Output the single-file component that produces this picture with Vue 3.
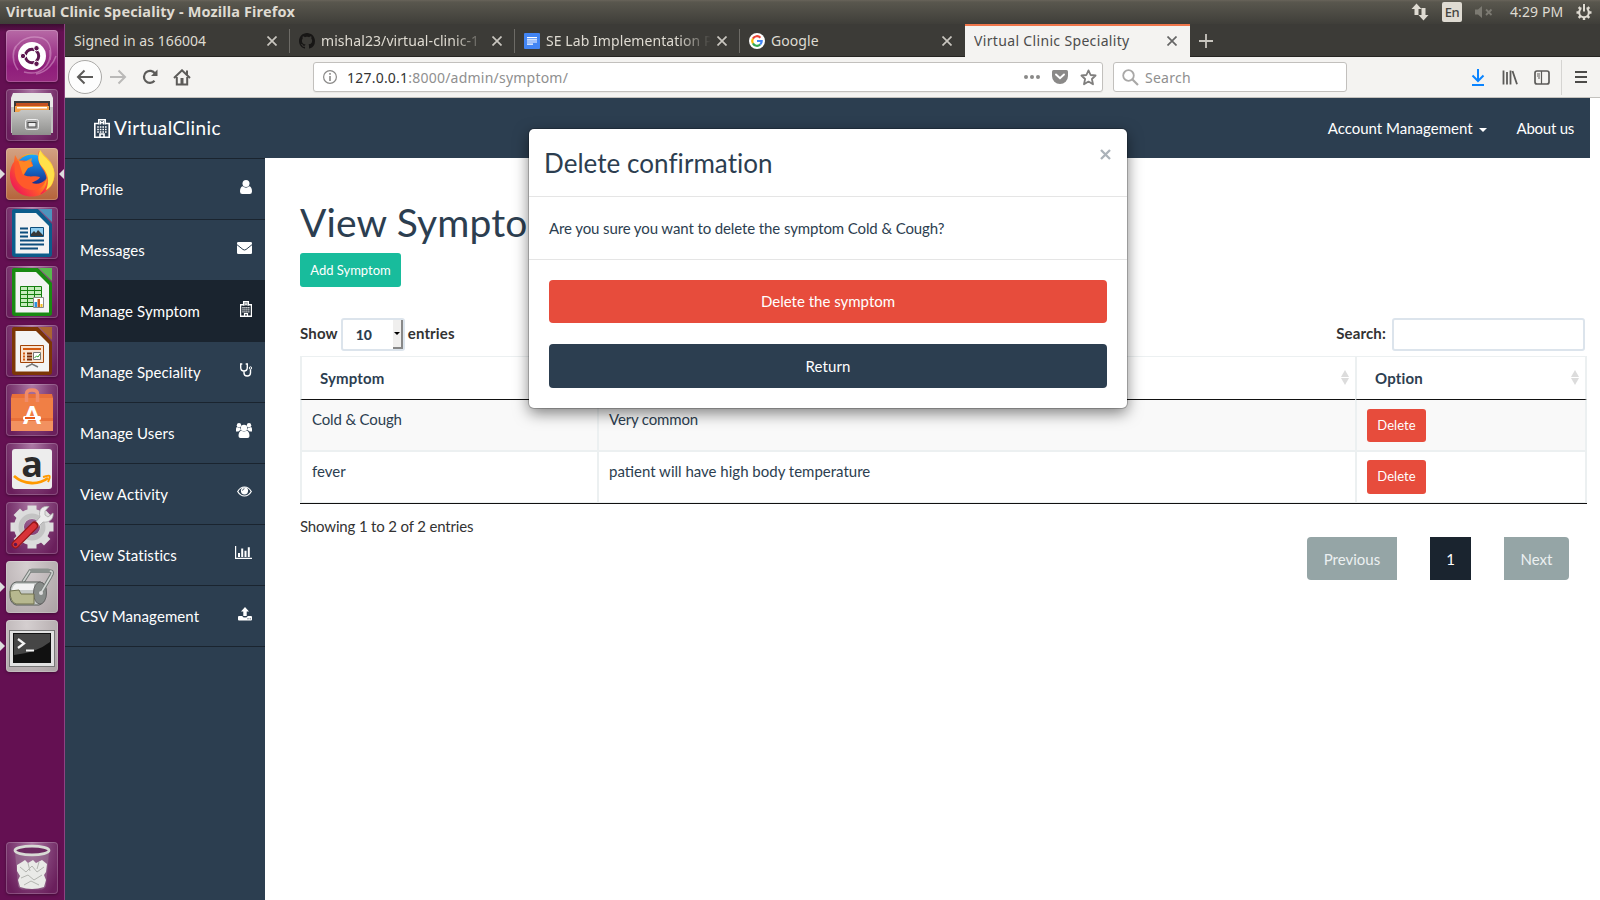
<script setup>
const tabs = [
  { title: 'Signed in as 166004', icon: null },
  { title: 'mishal23/virtual-clinic-1', icon: 'github', fade: true },
  { title: 'SE Lab Implementation P', icon: 'docs', fade: true },
  { title: 'Google', icon: 'google' },
  { title: 'Virtual Clinic Speciality', icon: null, active: true },
]
const menu = [
  { label: 'Profile', icon: 'user' },
  { label: 'Messages', icon: 'mail' },
  { label: 'Manage Symptom', icon: 'hospital', active: true },
  { label: 'Manage Speciality', icon: 'steth' },
  { label: 'Manage Users', icon: 'users' },
  { label: 'View Activity', icon: 'eye' },
  { label: 'View Statistics', icon: 'chart' },
  { label: 'CSV Management', icon: 'upload' },
]
const rows = [
  { name: 'Cold & Cough', info: 'Very common' },
  { name: 'fever', info: 'patient will have high body temperature' },
]
</script>

<template>
  <div class="desktop">
    <header class="panel">
      <b class="wintitle">Virtual Clinic Speciality - Mozilla Firefox</b>
      <div class="tray">
        <svg class="t-net" width="18" height="18" viewBox="0 0 18 18"><path fill="#dfdbd2" d="M5.500 0.500 10.500 6H7.500V12H3.500V6H.5ZM12.500 17.500 7.500 12H10.500V5H14.500V12H17.500Z" /></svg>
        <span class="lang">En</span>
        <svg class="t-vol" width="18" height="14" viewBox="0 0 18 14"><path fill="#7c7a72" d="M0 4.500H3L7 1V13L3 9.500H0Z" /><path stroke="#7c7a72" stroke-width="1.800" d="M11 4.500 16.500 10M16.500 4.500 11 10" /></svg>
        <span class="clock">4:29 PM</span>
        <svg class="t-gear" width="16" height="18" viewBox="0 0 16 18"><circle cx="8" cy="9.500" r="4.800" fill="none" stroke="#dfdbd2" stroke-width="2" /><path stroke="#dfdbd2" stroke-width="2.400" d="M8 14v3M.5 9.500h3M12.500 9.500h3M2.700 14.800l2-2M13.300 14.800l-2-2M2.700 4.200l2 2M13.300 4.200l-2 2" /><path stroke="#4c4b44" stroke-width="5" d="M8 1v7.500" /><path stroke="#dfdbd2" stroke-width="2" d="M8 1v7.500" /></svg>
      </div>
    </header>

    <div class="below">
      <aside class="launcher">
        <div class="tile dash">
          <svg viewBox="0 0 52 52"><g fill="none" stroke="#e7b8dc" stroke-opacity=".45" stroke-width="1.500"><path d="M8 32C4 14 20 4 36 8C44 11 46 20 44 30M44 20C46 38 32 46 18 42M12 40C6 32 6 22 10 16M30 44C42 42 48 32 50 26" /></g><circle cx="26" cy="27" r="14" fill="#7d1a68" opacity=".5" /><circle cx="26" cy="26" r="14" fill="#fff" /><circle cx="26" cy="26" r="6.700" fill="none" stroke="#5e1650" stroke-width="3" /><path stroke="#fff" stroke-width="1.300" d="M26 26 18 26M26 26 30 19M26 26 30 33" /><g fill="#5e1650" stroke="#fff" stroke-width="1"><circle cx="17" cy="26" r="2.700" /><circle cx="30.500" cy="18.200" r="2.700" /><circle cx="30.500" cy="33.800" r="2.700" /></g></svg>
        </div>
        <div class="tile">
          <svg viewBox="0 0 52 52"><defs><linearGradient id="cab" x1="0" y1="0" x2="0" y2="1"><stop offset="0" stop-color="#c6c6c4" /><stop offset="1" stop-color="#8f8f8d" /></linearGradient></defs><path fill="#e9e9e7" d="M7 4H45L47 9V44H5V9Z" /><path fill="#777" d="M5 18h42v26H5z" opacity=".35" /><path fill="#3a3a3a" d="M8 12h36v12H8z" /><path fill="#c4501f" d="M10 14h32v3H10z" /><path fill="#f3a24a" d="M9 17h34v7H9z" /><path fill="#fff" d="M11 18h30v1.500H11z" /><path fill="url(#cab)" d="M6 23H13L15 21H45V46H6Z" /><rect x="19.500" y="30.500" width="13" height="10" rx="2" fill="#aaa" stroke="#eee" /><rect x="22" y="33.500" width="8" height="4.500" fill="#eee" stroke="#444" /></svg>
        </div>
        <div class="tile fox running focused">
          <svg viewBox="0 0 52 52"><defs><linearGradient id="ff" x1=".95" y1=".1" x2=".1" y2=".85"><stop offset="0" stop-color="#fff44f" /><stop offset=".35" stop-color="#ffb81c" /><stop offset=".65" stop-color="#ff5a2a" /><stop offset="1" stop-color="#ef1a55" /></linearGradient><linearGradient id="fb" x1="0" y1="0" x2="0" y2="1"><stop offset="0" stop-color="#19a7ff" /><stop offset="1" stop-color="#15207e" /></linearGradient></defs><path fill="url(#ff)" d="M9 7 12 12C16 7 22 5 28 6L36 10C35 5 33 4 34 2C38 8 46 13 48 23C50 38 38 48.500 26 48.500C12 48.500 3 38 4 25C4.500 19 7 15 8 14Z" /><circle cx="26" cy="23" r="16.500" fill="url(#fb)" /><path fill="url(#ff)" d="M33 2.500C38 8 47 12 48.500 25C49 36 42 44 34 46.500C42 38 42 30 38 23C34 17 30 12 33 2.500Z" /><path fill="#ffe14a" d="M34 2.500C38 10 48 14 48 27C47.500 36 44 40 40 42C44 33 42 26 37 20C32 15 31 9 34 2.500Z" /><path fill="#ff5a2a" d="M9 14C14 12 20 12 26 14L27 18L22 20C20 23 19 25 18 27C25 30 28 27 34 29C33 32 28 33 26 35C31 37 37 35 40 31C38 41 29 44 21 41C12 38 7 30 9 14Z" /><path fill="#ff9122" d="M12 12 18 14 26 10 25 15 27 18 22 20 17 27Z" opacity=".8" /></svg>
        </div>
        <div class="tile doc">
          <svg viewBox="0 0 52 52"><path fill="#0b5c8b" d="M8 2H32L46 17V47q0 3-3 3H9q-3 0-3-3V4q0-2 2-2Z" /><path fill="#f4f4f4" d="M9.500 6H30L43 19V46.500H9.500Z" /><path fill="#4d94bd" d="M33 2H46V15Z" /><path stroke="#0d4d7c" stroke-width="2" d="M14 21.500h8M14 25.500h8M14 29.500h8M14 33.500h24M14 37.500h24M14 41.500h18" /><path fill="#8fcdf0" stroke="#0d4d7c" d="M24.500 20.500h13v9h-13z" /><path fill="#383838" d="M25 29V27L28 24L30 26L32 23L37 28V29Z" /></svg>
        </div>
        <div class="tile doc">
          <svg viewBox="0 0 52 52"><path fill="#198a12" d="M8 2H32L46 17V47q0 3-3 3H9q-3 0-3-3V4q0-2 2-2Z" /><path fill="#f4f4f4" d="M9.500 6H30L43 19V46.500H9.500Z" /><path fill="#58b94e" d="M33 2H46V15Z" /><path fill="#c5ecbc" stroke="#168010" d="M14.500 20.500h21v20h-21zM14.500 24.500h21M14.500 28.500h21M14.500 32.500h21M14.500 36.500h21M21.500 20.500v20M28.500 20.500v20" /><path fill="#fff" stroke="#888" d="M27.500 31.500h10v10h-10z" /><path fill="#2a92df" d="M28.500 36h2.500v5h-2.500z" /><path fill="#c85a1a" d="M31.500 33h2.500v8h-2.500z" /><path fill="#f2bb1d" d="M34.500 38h2v3h-2z" /></svg>
        </div>
        <div class="tile doc">
          <svg viewBox="0 0 52 52"><path fill="#7c3606" d="M8 2H32L46 17V47q0 3-3 3H9q-3 0-3-3V4q0-2 2-2Z" /><path fill="#f4f4f4" d="M9.500 6H30L43 19V46.500H9.500Z" /><path fill="#aa6532" d="M33 2H46V15Z" /><path fill="#f9e3d0" stroke="#a24408" d="M14.500 20.500h23v17h-23z" /><path fill="#d35a10" d="M17 23h18v2H17z" /><path stroke="#d35a10" stroke-width="2" d="M17 28.500h2M17 31.500h2M17 34.500h2" /><path stroke="#7a2c05" stroke-width="2" d="M21 28.500h5M21 31.500h5M21 34.500h5" /><path fill="#fff" stroke="#777" d="M27.500 27.500h7v7h-7z" /><path fill="none" stroke="#2fa02a" d="M28.500 33 30.500 31 32 32 34 29" /><path stroke="#777" stroke-width="1.500" d="M26 38v2M20 42l6-3 6 3" fill="none" /></svg>
        </div>
        <div class="tile">
          <svg viewBox="0 0 52 52"><path fill="#e8703a" d="M6 10H46L47 14V47H5V14Z" /><path fill="#f07f45" d="M5 14h42v20H5z" /><path fill="#f29160" d="M5 37h42v10H5z" /><path fill="none" stroke="#ef8b6a" stroke-width="3.500" d="M20.500 18V10q0-4 5.500-4t5.500 4v8" /><text x="26" y="40" text-anchor="middle" font-family="Lato, sans-serif" font-weight="900" font-size="25" fill="#fff">A</text><rect x="17" y="32" width="18" height="4" rx="1.500" fill="#fff" /><rect x="19" y="33" width="10" height="2" fill="#ea5b1c" /></svg>
        </div>
        <div class="tile">
          <svg viewBox="0 0 52 52"><rect x="6" y="6" width="40" height="40" rx="3" fill="#ededed" /><text x="26" y="34" text-anchor="middle" font-family="Open Sans, sans-serif" font-weight="700" font-size="36" fill="#2b2b2b">a</text><path fill="none" stroke="#f90" stroke-width="2.800" d="M8 33C18 42 33 42 42 35" /><path fill="none" stroke="#f90" stroke-width="2" d="M37 34C41 33 43 32 43.500 33C44 34 43 37 42 39" /></svg>
        </div>
        <div class="tile">
          <svg viewBox="0 0 52 52"><g stroke="#dedede" stroke-width="9"><path d="M26 3.500V12M26 38V46.500M4.500 25H13M39 25H47.500M10.800 9.800 17 16M35 34 41.200 40.200M10.800 40.200 17 34M35 16 41.200 9.800" /></g><circle cx="26" cy="25" r="13" fill="none" stroke="#dcdcdc" stroke-width="10" /><circle cx="26" cy="25" r="11" fill="none" stroke="#c3c3c3" stroke-width="5" /><path fill="#ececec" stroke="#a9a9a9" stroke-width=".8" d="M27 23 34 15C32 8 36 3.500 43 4.500L39 9V13L42 15L47 11C48 17 43 21 37 20L30 27Z" /><path stroke="#94161a" stroke-width="8" stroke-linecap="round" d="M9.500 42.500 28.500 23.500" /><path stroke="#d83338" stroke-width="5.500" stroke-linecap="round" d="M9.500 42.500 28 24" /><circle cx="9.500" cy="42.500" r="1.700" fill="#5e1650" /></svg>
        </div>
        <div class="tile gray running">
          <svg viewBox="0 0 52 52"><path fill="none" stroke="#777d7a" stroke-width="3.500" d="M17 21 24 10H44Q47 10 46 13L35 32" /><path fill="none" stroke="#cfd4d1" stroke-width="1.500" d="M17 21 24 10H44Q47 10 46 13L35 32" /><path stroke="#8c928f" stroke-width="4" stroke-linecap="round" d="M26 9.500h16" /><path fill="#c5c9c7" stroke="#555a57" d="M10 21H34Q41 22 40 32Q39 43 33 44H10Q3 42 4 32Q4 22 10 21Z" /><path fill="#f2f2f2" d="M10 23H28V29H6Q7 24 10 23Z" /><ellipse cx="34" cy="32" rx="6.500" ry="11" fill="#868b88" stroke="#666" /><path fill="none" stroke="#777d7a" stroke-width="3" d="M45 15 35.500 31" /><path fill="none" stroke="#d5dad7" stroke-width="1.500" d="M45 15 35.500 31" /><circle cx="35" cy="32" r="2" fill="#ddd" /><path fill="#b7b88f" stroke="#70714e" d="M4 30 13 29 15 33H28V43H10Q4 41 4 30Z" /></svg>
        </div>
        <div class="tile gray running">
          <svg viewBox="0 0 52 52"><rect x="3.500" y="10.500" width="45" height="36" fill="#e2e2e2" stroke="#777" /><rect x="7" y="13" width="38" height="30" fill="#111" /><path fill="#464646" d="M8 14H44V22Q30 33 8 35Z" /><path fill="none" stroke="#f4f4f4" stroke-width="2.200" d="M12 19 18 23.500 12 28" /><path stroke="#f4f4f4" stroke-width="2" d="M20 30.500h8" /></svg>
        </div>
        <div class="tile trash">
          <svg viewBox="0 0 52 52"><path fill="#9b7d97" fill-opacity=".5" d="M9 10H43L40 44Q39 47 36 47.500H16Q13 47 12 44Z" /><path fill="#e9eae7" d="M11 23 16 20 19 18 22 21 27 18 30 21 36 18 41 22 40 30 38 33 40 38 38 45Q26 49 14 45L12 38 14 34 11 29Z" /><path stroke="#b3b5b0" fill="none" d="M14 25 20 30 26 24 31 30 38 25M15 36 22 33 28 38 36 33M18 43 25 39 33 43M22 21 24 29M33 20 31 27" /><ellipse cx="26" cy="8.500" rx="17" ry="4.300" fill="#6b2a60" stroke="#d8dad5" stroke-width="2.800" /></svg>
        </div>
      </aside>

      <section class="browser">
        <div class="tabs">
          <div v-for="t in tabs" :key="t.title" class="tab" :class="{ active: t.active }">
            <svg v-if="t.icon === 'github'" class="fav" viewBox="0 0 16 16"><path fill="#171615" d="M8 0C3.580 0 0 3.580 0 8c0 3.540 2.290 6.530 5.470 7.590.4.070.55-.17.55-.38 0-.19-.01-.82-.01-1.490-2.010.37-2.530-.49-2.690-.94-.09-.23-.48-.94-.82-1.130-.28-.15-.68-.52-.01-.53.63-.01 1.080.58 1.230.82.72 1.210 1.870.87 2.330.66.07-.52.28-.87.51-1.070-1.780-.2-3.640-.89-3.640-3.950 0-.87.31-1.590.82-2.150-.08-.2-.36-1.020.08-2.120 0 0 .67-.21 2.200.82.64-.18 1.320-.27 2-.27s1.360.09 2 .27c1.530-1.040 2.200-.82 2.200-.82.44 1.100.16 1.920.08 2.120.51.56.82 1.270.82 2.150 0 3.070-1.870 3.750-3.650 3.950.29.25.54.73.54 1.480 0 1.070-.01 1.930-.01 2.200 0 .21.15.46.55.38A8.010 8.010 0 0 0 16 8c0-4.420-3.580-8-8-8Z" /></svg>
            <svg v-if="t.icon === 'docs'" class="fav" viewBox="0 0 16 16"><rect width="16" height="16" rx="1" fill="#4285f4" /><path stroke="#fff" stroke-width="1.200" d="M3 4.600h10M3 6.800h10M3 9h10M3 11.200h6" /></svg>
            <svg v-if="t.icon === 'google'" class="fav" viewBox="0 0 16 16"><circle cx="8" cy="8" r="8" fill="#fff" /><g fill="none" stroke-width="2.200"><path stroke="#ea4335" d="M3.900 5.600A4.700 4.700 0 0 1 11.400 4.700" /><path stroke="#fbbc05" d="M3.900 10.400A4.700 4.700 0 0 1 3.900 5.600" /><path stroke="#34a853" d="M11.200 11.500A4.700 4.700 0 0 1 3.900 10.400" /><path stroke="#4285f4" d="M8 8H12.700A4.700 4.700 0 0 1 11.200 11.500" /></g></svg>
            <span class="tt" :class="{ fade: t.fade }">{{ t.title }}</span>
            <svg class="x" viewBox="0 0 10 10"><path d="M.5.5 9.500 9.500M9.500.5.5 9.500" /></svg>
          </div>
          <svg class="plus" viewBox="0 0 14 14"><path stroke="#c9c6bf" stroke-width="1.800" d="M7 0v14M0 7h14" /></svg>
        </div>

        <div class="toolbar">
          <div class="back"><svg width="18" height="16" viewBox="0 0 18 16"><path d="M17 8H2M8.500 1.500 2 8l6.500 6.500" fill="none" stroke="#5c5b59" stroke-width="2" /></svg></div>
          <svg class="fwd" width="18" height="16" viewBox="0 0 18 16"><path d="M1 8h15M9.500 1.500 16 8 9.500 14.500" fill="none" stroke="#bab9b8" stroke-width="2" /></svg>
          <svg class="reload" width="16" height="16" viewBox="0 0 16 16"><path d="M12.500 11.800A6 6 0 1 1 13 4.600" fill="none" stroke="#5c5b59" stroke-width="2.200" /><path fill="#5c5b59" d="M15.500.5V7H9Z" /></svg>
          <svg class="home" width="18" height="17" viewBox="0 0 18 17"><path d="M1 9 9 1.300 17 9" fill="none" stroke="#5c5b59" stroke-width="2" /><path d="M3.800 8V15.500H14.200V8" fill="none" stroke="#5c5b59" stroke-width="2" /><path d="M7.500 9h3v6.500h-3z" fill="#5c5b59" /><path d="M13 1.500h2v5l-2-2z" fill="#5c5b59" /></svg>
          <div class="url">
            <svg width="14" height="14" viewBox="0 0 14 14"><circle cx="7" cy="7" r="6.400" fill="none" stroke="#8a8988" stroke-width="1.200" /><path stroke="#8a8988" stroke-width="1.600" d="M7 6v5M7 3v1.700" /></svg>
            <span class="addr"><i>127.0.0.1</i>:8000/admin/symptom/</span>
            <svg class="dots" width="16" height="4" viewBox="0 0 16 4"><g fill="#8a8988"><circle cx="2" cy="2" r="2" /><circle cx="8" cy="2" r="2" /><circle cx="14" cy="2" r="2" /></g></svg>
            <svg class="pocket" width="16" height="14" viewBox="0 0 16 14"><path fill="#8a8988" d="M1.500 0h13Q16 0 16 1.500V6A8 8 0 0 1 0 6V1.500Q0 0 1.500 0Z" /><path fill="none" stroke="#fff" stroke-width="1.900" d="M4 4.500 8 8.300 12 4.500" stroke-linecap="round" /></svg>
            <svg class="star" width="17" height="17" viewBox="0 0 17 17"><path fill="none" stroke="#7f7e7d" stroke-width="1.800" stroke-linejoin="round" d="M8.500 1.400 10.600 6 15.600 6.500 11.900 10 13 15.300 8.500 12.600 4 15.300 5.100 10 1.400 6.500 6.400 6Z" /></svg>
          </div>
          <div class="search">
            <svg width="17" height="17" viewBox="0 0 17 17"><circle cx="6.500" cy="6.500" r="5.300" fill="none" stroke="#a9a8a7" stroke-width="1.800" /><path stroke="#a9a8a7" stroke-width="2.200" d="M10.500 10.500 16 16" /></svg>
            <span>Search</span>
          </div>
          <div class="tools">
            <svg width="14" height="17" viewBox="0 0 14 17"><path fill="none" stroke="#0a84ff" stroke-width="2" d="M7 0v12M1.500 6.500 7 12l5.500-5.500M1 16h12" /></svg>
            <svg width="16" height="15" viewBox="0 0 16 15"><path fill="none" stroke="#5c5b59" stroke-width="1.800" d="M1.500.5v14M5 2v12.500M8.500 .5v14M10.500 1 15 14.200" /></svg>
            <svg width="16" height="15" viewBox="0 0 16 15"><rect x="1" y="1" width="14" height="13" rx="2" fill="none" stroke="#5c5b59" stroke-width="1.700" /><path stroke="#5c5b59" stroke-width="1.200" d="M7.500 1v13M3 4h3M3 6h3M4 8h2" /></svg>
            <span class="div"></span>
            <svg width="12" height="12" viewBox="0 0 12 12"><path stroke="#4c4b49" stroke-width="1.800" d="M0 1h12M0 6h12M0 11h12" /></svg>
          </div>
        </div>

        <div class="page">
          <nav class="nav">
            <div class="brand">
              <svg width="16" height="19" viewBox="0 0 16 19"><path fill="none" stroke="#fff" stroke-width="1.600" d="M4.500 4.500H.8V18.200H15.200V4.500H11.500M4.800 5.500V.8H11.200V5.500" /><path stroke="#fff" stroke-width="1.300" d="M6.600 2v3.500M9.400 2v3.500M6.600 3.700h2.800" /><path stroke="#fff" stroke-width="1.600" stroke-dasharray="1.600 1" d="M3.200 8h10M3.200 10.500h10M3.200 13h10" /><path fill="none" stroke="#fff" stroke-width="1.600" d="M6 18V15h4V18" /></svg>
              <span>VirtualClinic</span>
            </div>
            <div class="links"><span>Account Management<em class="caret"></em></span><span class="about">About us</span></div>
          </nav>
          <div class="content">
            <ul class="side">
              <li v-for="m in menu" :key="m.label" :class="{ on: m.active }">
                <span>{{ m.label }}</span>
                <svg v-if="m.icon === 'user'" width="12" height="14" viewBox="0 0 12 14"><circle cx="6" cy="3.600" r="3.500" fill="#fff" /><path fill="#fff" d="M2.700 6.300Q6 9 9.300 6.300Q12 7 12 11.500Q12 14 9.700 14H2.300Q0 14 0 11.500Q0 7 2.700 6.300Z" /></svg>
                <svg v-else-if="m.icon === 'mail'" width="15" height="12" viewBox="0 0 15 12"><rect width="15" height="12" rx="1.300" fill="#fff" /><path fill="none" stroke="#2c3e50" d="M0 2.700 6 7.500Q7.500 8.500 9 7.500L15 2.700" /></svg>
                <svg v-else-if="m.icon === 'hospital'" width="12" height="16" viewBox="0 0 16 19" preserveAspectRatio="none"><path fill="none" stroke="#fff" stroke-width="1.700" d="M4.500 4.500H.8V18.200H15.200V4.500H11.500M4.800 5.500V.8H11.200V5.500" /><path stroke="#fff" stroke-width="1.300" d="M6.600 2v3.500M9.400 2v3.500M6.600 3.700h2.800" /><path stroke="#fff" stroke-width="1.600" stroke-dasharray="1.600 1" d="M3.200 8h10M3.200 10.500h10M3.200 13h10" /><path fill="none" stroke="#fff" stroke-width="1.600" d="M6 18V15h4V18" /></svg>
                <svg v-else-if="m.icon === 'steth'" width="12" height="14" viewBox="0 0 12 14"><path fill="none" stroke="#fff" stroke-width="1.400" d="M2.300 1H.7V4.500Q.7 8 4 8T7.300 4.500V1H5.700M4 8V10Q4 13 7.200 13T10.500 10V6.500" /><circle cx="10.500" cy="5" r="1.200" fill="none" stroke="#fff" /></svg>
                <svg v-else-if="m.icon === 'users'" width="16" height="15" viewBox="0 0 16 15"><g fill="#fff"><circle cx="8" cy="5" r="3.200" /><circle cx="3" cy="2.300" r="2.200" /><circle cx="13" cy="2.300" r="2.200" /><path d="M5.300 7.500Q8 9.500 10.700 7.500Q13.500 8.500 13.500 13Q13.500 15 11.500 15H4.500Q2.500 15 2.500 13Q2.500 8.500 5.300 7.500ZM0 8.500V6Q0 4 1.200 4Q3 5.300 4.200 4.600Q4.200 6 5 7Q3.500 7.200 2.500 8.500ZM16 8.500V6Q16 4 14.800 4Q13 5.300 11.800 4.600Q11.800 6 11 7Q12.500 7.200 13.500 8.500Z" /></g></svg>
                <svg v-else-if="m.icon === 'eye'" width="15" height="11" viewBox="0 0 15 11"><path fill="none" stroke="#fff" stroke-width="1.200" d="M.7 5.500Q3.300 1 7.500 1T14.300 5.500Q11.700 10 7.500 10T.7 5.500Z" /><circle cx="7.500" cy="4.800" r="3.600" fill="#fff" /><path fill="none" stroke="#2c3e50" stroke-width=".8" d="M5.500 4.700Q5.600 2.800 7.500 2.700" /></svg>
                <svg v-else-if="m.icon === 'chart'" width="17" height="13" viewBox="0 0 17 13"><path stroke="#fff" fill="none" stroke-width="1.200" d="M.6 0V12.400H17" /><path fill="#fff" d="M3 7h2v4H3zM6.200 2.500h2V11h-2zM9.500 4.700h2V11h-2zM12.800 1.200h2V11h-2z" /></svg>
                <svg v-else width="14" height="14" viewBox="0 0 14 14"><path fill="#fff" d="M7 0 11 4.500H8.700V9H5.300V4.500H3Z" /><path fill="#fff" d="M1 9H4.300Q4.700 10.500 7 10.500T9.700 9H13Q14 9 14 10V12.500Q14 13.500 13 13.500H1Q0 13.500 0 12.500V10Q0 9 1 9Z" /><path stroke="#2c3e50" d="M9.500 11.800h1M11.700 11.800h1" /></svg>
              </li>
            </ul>
            <main class="main">
              <h1>View Symptoms</h1>
              <button class="add">Add Symptom</button>
              <div class="controls">
                <label class="len"><span class="lift">Show</span><span class="select"><b>10</b><i class="drop"></i></span><span class="lift">entries</span></label>
                <label class="find"><span class="lift">Search:</span><span class="input"></span></label>
              </div>
              <table>
                <colgroup><col class="c1"><col class="c2"><col class="c3"></colgroup>
                <thead><tr><th>Symptom</th><th>Description<i class="sort"></i></th><th>Option<i class="sort"></i></th></tr></thead>
                <tbody><tr v-for="r in rows" :key="r.name"><td>{{ r.name }}</td><td>{{ r.info }}</td><td><button class="del">Delete</button></td></tr></tbody>
              </table>
              <div class="foot">
                <span class="count">Showing 1 to 2 of 2 entries</span>
                <div class="pager"><span class="prev">Previous</span><span class="cur">1</span><span class="next">Next</span></div>
              </div>
            </main>
          </div>
        </div>
      </section>
    </div>

    <div class="modal">
      <div class="mhead"><span>Delete confirmation</span><svg width="11" height="11" viewBox="0 0 11 11"><path stroke="#abb2b9" stroke-width="2.300" d="M1 1 10 10M10 1 1 10" /></svg></div>
      <div class="mbody">Are you sure you want to delete the symptom Cold &amp; Cough?</div>
      <div class="mfoot"><button class="danger">Delete the symptom</button><button class="dark">Return</button></div>
    </div>
  </div>
</template>

<style>
body { margin: 0; overflow: hidden; }
</style>
<style scoped>
* { box-sizing: border-box; }
.desktop { position: relative; width: 1600px; height: 900px; overflow: hidden; display: flex; flex-direction: column; background: #fff; font: 15px/21px Lato, "Liberation Sans", sans-serif; color: #2c3e50; }
svg { display: block; flex: none; }
button { border: 0; font-family: inherit; color: #fff; }
.panel { height: 24px; flex: none; display: flex; align-items: center; justify-content: space-between; padding: 0 8px 0 6px; background: linear-gradient(#68645a 0, #59574e 2px, #3f3e39 100%); font: 14px/24px "Noto Sans", sans-serif; color: #dfdbd2; }
.wintitle { font-size: 14.500px; line-height: 22px; margin-top: -2px; letter-spacing: .15px; white-space: nowrap; }
.tray { display: flex; align-items: center; }
.lang { width: 20px; height: 20px; margin-left: 13px; background: #dfdbd2; color: #45443f; border-radius: 2px; font: 500 13px/21px "Noto Sans", sans-serif; text-align: center; letter-spacing: -.5px; }
.t-vol { margin-left: 13px; }
.clock { margin-left: 17px; width: 53px; white-space: nowrap; letter-spacing: .1px; }
.t-gear { margin-left: 13px; }
.below { flex: 1; display: flex; min-height: 0; }
.launcher { width: 65px; flex: none; display: flex; flex-direction: column; gap: 7px; padding: 6px 0 6px 6px; border-right: 1px solid #8e4382; background: linear-gradient(#3d0c32 0, #641052 8px, #641052 100%); }
.tile { position: relative; width: 52px; height: 52px; flex: none; border-radius: 4px; background: radial-gradient(ellipse at 50% 0, #ad7aa5 0, #85457b 45%, #6a1f5c 85%); box-shadow: inset 0 0 0 1px rgba(255,255,255,.2), 0 1px 3px rgba(0,0,0,.35); }
.tile svg { width: 52px; height: 52px; }
.dash { background: linear-gradient(#b76aa6, #8f1d7b 70%, #96287f); }
.fox { background: linear-gradient(#d3a283, #b5643b); }
.gray { background: radial-gradient(ellipse at 40% 10%, #d5cfd0, #aaa1a3); }
.trash { margin-top: auto; }
.running::before { content: ""; position: absolute; left: -6px; top: 21px; border: 5px solid transparent; border-left-color: #ddd; border-right: 0; }
.focused::after { content: ""; position: absolute; right: -6px; top: 21px; border: 5px solid transparent; border-right-color: #ddd; border-left: 0; }
.browser { flex: 1; display: flex; flex-direction: column; min-width: 0; }
.tabs { height: 33px; flex: none; display: flex; background: #3c3b37; border-bottom: 1px solid #262522; }
.tab { position: relative; width: 225px; height: 33px; display: flex; align-items: center; gap: 6px; padding: 0 13px 0 9px; font: 14px/33px "Noto Sans", sans-serif; letter-spacing: .07px; color: #dfdbd2; }
.tab:not(.active):not(:nth-child(4))::after { content: ""; position: absolute; right: 0; top: 5px; width: 1px; height: 24px; background: #6d6b66; }
.tab.active { background: #f4f3f1; border-top: 2px solid #f0764b; color: #4c4c4c; letter-spacing: .34px; line-height: 29px; }
.active .tt { margin-top: -2px; }
.active .x { margin-top: -2px; }
.fav { width: 16px; height: 16px; }
.tt { flex: 1; min-width: 0; overflow: hidden; white-space: nowrap; }
.tt.fade { -webkit-mask-image: linear-gradient(90deg, #000 80%, transparent); mask-image: linear-gradient(90deg, #000 80%, transparent); }
.x { width: 10px; height: 10px; fill: none; stroke: #c9c6bf; stroke-width: 1.700; }
.active .x { stroke: #666; }
.plus { width: 14px; height: 14px; margin: 10px 0 0 9px; }
.toolbar { height: 41px; flex: none; display: flex; align-items: center; padding: 0 13px 0 3px; background: #f4f3f1; border-bottom: 1px solid #c3c1bd; font: 14px/28px "Noto Sans", sans-serif; }
.back { width: 34px; height: 34px; border: 1px solid #aaa9a7; border-radius: 50%; background: #fdfdfd; display: flex; align-items: center; justify-content: center; }
.fwd { margin-left: 7px; }
.reload { margin-left: 15px; }
.home { margin-left: 15px; }
.url { width: 790px; height: 30px; margin-left: 122px; border: 1px solid #c2c0bd; border-radius: 3px; background: #fff; display: flex; align-items: center; padding: 0 5px 0 9px; box-shadow: 0 1px 1px rgba(0,0,0,.05); }
.addr { margin-left: 10px; flex: 1; padding-top: 1px; color: #8f8f8f; letter-spacing: .22px; }
.addr i { font-style: normal; color: #333; }
.pocket { margin-left: 12px; }
.star { margin-left: 12px; }
.search { width: 234px; height: 30px; margin-left: 10px; border: 1px solid #c2c0bd; border-radius: 3px; background: #fff; display: flex; align-items: center; padding-left: 8px; color: #8f8f8f; }
.search span { margin-left: 6px; padding-top: 1px; letter-spacing: .25px; }
.tools { margin-left: auto; display: flex; align-items: center; }
.tools svg:nth-child(2) { margin-left: 17px; }
.tools svg:nth-child(3) { margin-left: 16px; }
.div { width: 1px; height: 35px; margin: 0 13px 0 11px; background: #d5d4d2; }
.page { flex: 1; display: flex; flex-direction: column; min-height: 0; }
.nav { width: 1525px; height: 60px; flex: none; display: flex; justify-content: space-between; align-items: center; padding: 0 16px 0 29px; background: #2c3e50; color: #fff; }
.brand { display: flex; align-items: center; gap: 4px; font-size: 19px; letter-spacing: .42px; }
.brand span { margin-top: -2px; }
.links { display: flex; gap: 30px; padding-top: 1px; }
.about { letter-spacing: -.25px; }
.caret { display: inline-block; margin-left: 6px; vertical-align: middle; border: 4px solid transparent; border-top-color: #fff; border-bottom: 0; }
.content { flex: 1; display: flex; min-height: 0; }
.side { width: 200px; flex: none; margin: 0; padding: 0; list-style: none; background: #2c3e50; border-top: 1px solid #1a242f; color: #fff; }
.side li { height: 61px; display: flex; justify-content: space-between; align-items: center; padding: 0 13px 0 15px; border-bottom: 1px solid #1a242f; letter-spacing: .09px; }
.side li svg { margin-top: -5px; }
.side .on { background: #1a242f; }
.main { width: 1322px; padding: 41px 0 0 35px; }
h1 { margin: 0; height: 54px; font: 400 39px/46px Lato, sans-serif; letter-spacing: .15px; }
.add { display: block; width: 101px; height: 34px; padding: 0; background: #18bc9c; border-radius: 3px; font-size: 13px; }
.controls { height: 33px; margin-top: 31px; display: flex; justify-content: space-between; align-items: center; padding-right: 2px; font-weight: 700; color: #333; }
.len, .find { display: flex; align-items: center; letter-spacing: .15px; }
.lift { margin-top: -2px; }
.select { width: 64px; height: 33px; margin: 0 3px; display: flex; justify-content: space-between; align-items: center; padding: 0 0 0 13px; border: 2px solid #dce4ec; border-radius: 3px; color: #2c3e50; font-size: 14px; letter-spacing: 0; }
.drop { width: 10px; height: 29px; border-right: 2px solid #888; border-bottom: 2px solid #888; background: #f0efee; display: flex; align-items: center; justify-content: center; }
.drop::after { content: ""; border: 3px solid transparent; border-top-color: #000; border-bottom: 0; }
.input { width: 193px; height: 33px; margin-left: 6px; border: 2px solid #dce4ec; border-radius: 3px; }
table { width: 1287px; margin-top: 5px; table-layout: fixed; border-collapse: separate; border-spacing: 0; border-top: 1px solid #ecf0f1; border-bottom: 1px solid #111; }
.c1 { width: 297px; } .c2 { width: 758px; } .c3 { width: 232px; }
th { position: relative; height: 43px; padding: 1px 18px 0; text-align: left; letter-spacing: .15px; border-left: 2px solid #ecf0f1; border-bottom: 1px solid #111; }
td { height: 52px; padding: 9px 10px 0; vertical-align: top; border-left: 2px solid #ecf0f1; border-bottom: 2px solid #ecf0f1; }
tr:last-child td { height: 51px; border-bottom-width: 1px; }
tr:last-child .del { height: 34px; margin-top: -1px; }
tbody tr:first-child td { background: #f9f9f9; letter-spacing: -.15px; }
th:last-child, td:last-child { border-right: 2px solid #ecf0f1; }
.sort { position: absolute; right: 6px; top: 13px; width: 8px; display: flex; flex-direction: column; gap: 1px; }
.sort::before, .sort::after { content: ""; border: 4px solid transparent; }
.sort::before { border-top: 0; border-bottom: 7px solid #dcdcdc; }
.sort::after { border-bottom: 0; border-top: 7px solid #dcdcdc; }
.del { display: block; width: 59px; height: 33px; padding: 0 0 2px; background: #e74c3c; border-radius: 3px; font-size: 13px; letter-spacing: .05px; }
.foot { display: flex; justify-content: space-between; padding: 13px 18px 0 0; color: #333; }
.count { margin-top: -1px; letter-spacing: -.16px; }
.pager { display: flex; gap: 33px; margin-top: 20px; line-height: 45px; text-align: center; color: #ecf0f1; }
.pager span { height: 43px; background: #95a5a6; }
.pager .prev { width: 90px; border-radius: 4px 0 0 4px; }
.pager .cur { width: 41px; background: #1a242f; color: #fff; }
.pager .next { width: 65px; border-radius: 0 4px 4px 0; }
.modal { position: absolute; left: 529px; top: 129px; width: 598px; height: 279px; background: #fff; border-radius: 5px; box-shadow: 0 0 0 1px rgba(0,0,0,.2), 0 5px 15px rgba(0,0,0,.5); }
.mhead { height: 68px; display: flex; justify-content: space-between; padding: 20px 16px 0 15px; border-bottom: 1px solid #e5e5e5; font-size: 26px; line-height: 29px; letter-spacing: .05px; }
.mbody { height: 63px; padding: 21px 20px 20px; letter-spacing: -.11px; border-bottom: 1px solid #e5e5e5; }
.mfoot { display: flex; flex-direction: column; gap: 21px; padding: 20px; }
.mfoot button { height: 43px; border-radius: 4px; font-size: 15px; }
.mfoot .danger { padding: 0 0 2px; background: #e74c3c; }
.mfoot .dark { height: 44px; background: #2c3e50; letter-spacing: .15px; }
</style>
